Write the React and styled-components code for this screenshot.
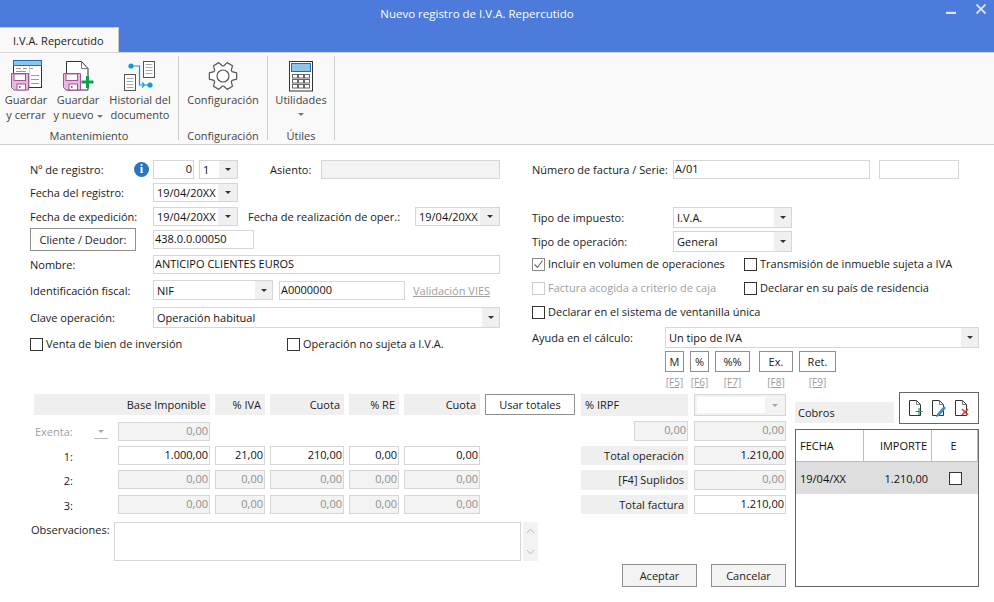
import React from 'react';
import styled, { createGlobalStyle } from 'styled-components';

const GlobalStyle = createGlobalStyle`
  html, body { margin: 0; padding: 0; background: #fff; }
  body {
    font-family: "Open Sans", "Noto Sans", "Liberation Sans", sans-serif;
    font-size: 11px;
    color: #1a1a1a;
  }
`;

const Window = styled.div`
  width: 994px;
  height: 602px;
  overflow: hidden;
  background: #fff;
  display: flex;
  flex-direction: column;
`;

const TitleBar = styled.div`
  height: 27px;
  background: #4c7bdc;
  color: #fff;
  font-size: 11.5px;
  display: flex;
  align-items: center;
  justify-content: center;
  padding-right: 40px;
  position: relative;
`;

const WinControls = styled.div`
  position: absolute;
  right: 8px;
  top: 4px;
  display: flex;
  gap: 20px;
  align-items: center;
`;

const TabStrip = styled.div`
  height: 25px;
  background: #4c7bdc;
  display: flex;
`;

const Tab = styled.div`
  width: 119px;
  background: #f9f9f9;
  border-top: 1px solid #c9c9c9;
  border-right: 1px solid #c9c9c9;
  box-sizing: border-box;
  display: flex;
  align-items: center;
  padding-left: 13px;
  color: #222;
`;

const Ribbon = styled.div`
  height: 93px;
  box-sizing: border-box;
  background: #f9f9f9;
  border-top: 1px solid #d4d4d4;
  border-bottom: 1px solid #cfcfcf;
  display: flex;
  padding-top: 3px;
`;

const Group = styled.div`
  width: ${({ $w }) => $w}px;
  height: 84px;
  box-sizing: border-box;
  border-right: 1px solid #cdcdcd;
  display: flex;
  flex-direction: column;
  align-items: center;
`;

const GroupItems = styled.div`
  height: 70px;
  flex-shrink: 0;
  box-sizing: border-box;
  padding: 3px ${({ $pr }) => $pr || 0}px 0 0;
  width: 100%;
  display: flex;
  justify-content: center;
  gap: ${({ $gap }) => $gap || 0}px;
`;

const GroupName = styled.div`
  color: #444;
  line-height: 14px;
  margin-top: 3px;
  flex-shrink: 0;
`;

const RibbonButton = styled.div`
  width: ${({ $w }) => $w}px;
  display: flex;
  flex-direction: column;
  align-items: center;
  color: #444;
  line-height: 15px;
  text-align: center;
  white-space: nowrap;
  svg { display: block; margin-bottom: -1px; }
`;

const CaretLine = styled.div`
  height: 15px;
  display: flex;
  align-items: center;
`;

const Caret = styled.span`
  display: inline-block;
  width: 0;
  height: 0;
  border-left: 3px solid transparent;
  border-right: 3px solid transparent;
  border-top: 3px solid ${({ $color }) => $color || '#333'};
  vertical-align: middle;
`;

const Body = styled.div`
  flex: 1;
  padding: 15px 0 0 30px;
`;

const Top = styled.div`
  display: flex;
  gap: 32px;
`;

const Column = styled.div`
  width: ${({ $w }) => $w}px;
  display: flex;
  flex-direction: column;
`;

const Row = styled.div`
  height: ${({ $h }) => $h || 19}px;
  margin-top: ${({ $mt }) => $mt || 0}px;
  display: flex;
  align-items: center;
`;

const Label = styled.div`
  width: ${({ $w }) => ($w ? `${$w}px` : 'auto')};
  margin-left: ${({ $ml }) => $ml || 0}px;
  flex-shrink: 0;
  white-space: nowrap;
`;

const Field = styled.div`
  width: ${({ $w }) => ($w ? `${$w}px` : 'auto')};
  flex: ${({ $grow }) => ($grow ? 1 : '0 0 auto')};
  height: ${({ $h }) => $h || 19}px;
  margin-left: ${({ $ml }) => $ml || 0}px;
  justify-self: ${({ $end }) => ($end ? 'end' : 'stretch')};
  box-sizing: border-box;
  border: 1px solid #d6d6d6;
  background: ${({ $off }) => ($off ? '#f3f3f3' : '#fff')};
  color: ${({ $off, $strong }) => ($off && !$strong ? '#909090' : '#111')};
  text-align: ${({ $right }) => ($right ? 'right' : 'left')};
  padding: 0 1px 1px 1px;
  line-height: 16px;
  white-space: nowrap;
  overflow: hidden;
`;

const Select = styled.div`
  width: ${({ $w }) => ($w ? `${$w}px` : 'auto')};
  height: ${({ $h }) => $h || 19}px;
  margin-left: ${({ $ml }) => $ml || 0}px;
  box-sizing: border-box;
  border: 1px solid #d6d6d6;
  display: flex;
  align-items: center;
  background: #fff;
  color: #111;
`;

const SelectText = styled.div`
  flex: 1;
  padding-left: ${({ $pad }) => $pad || 3}px;
  white-space: nowrap;
  overflow: hidden;
`;

const SelectArrow = styled.div`
  width: ${({ $w }) => $w || 17}px;
  align-self: stretch;
  background: #f0f0f0;
  display: flex;
  align-items: center;
  justify-content: center;
`;

const InfoDot = styled.div`
  width: 15px;
  height: 15px;
  border-radius: 50%;
  background: #2a76b9;
  color: #fff;
  font: bold 12px "Liberation Serif", serif;
  display: flex;
  align-items: center;
  justify-content: center;
  margin: 0 4px 0 0;
  flex-shrink: 0;
`;

const Button = styled.div`
  box-sizing: border-box;
  width: ${({ $w }) => $w}px;
  height: ${({ $h }) => $h || 21}px;
  border: 1px solid #8f8f8f;
  background: ${({ $grey }) => ($grey ? '#f3f3f3' : '#fff')};
  display: flex;
  align-items: center;
  justify-content: center;
  color: #222;
  flex-shrink: 0;
  white-space: nowrap;
`;

const LinkText = styled.div`
  margin-left: 8px;
  color: #a0a0a0;
  text-decoration: underline;
  white-space: nowrap;
`;

const CheckWrap = styled.div`
  width: ${({ $w }) => ($w ? `${$w}px` : 'auto')};
  display: flex;
  align-items: center;
  gap: 3px;
  white-space: nowrap;
  flex-shrink: 0;
  color: ${({ $off }) => ($off ? '#a0a0a0' : '#1a1a1a')};
`;

const CheckText = styled.span`
  margin-bottom: 2px;
`;

const Box = styled.div`
  width: 13px;
  height: 13px;
  box-sizing: border-box;
  border: 1px solid ${({ $tone }) => $tone || '#333'};
  background: #fff;
  display: flex;
  align-items: center;
  justify-content: center;
  flex-shrink: 0;
`;

const Shortcuts = styled.div`
  display: flex;
  margin-left: 133px;
  margin-top: 3px;
`;

const Shortcut = styled.div`
  display: flex;
  flex-direction: column;
  align-items: center;
  margin-right: ${({ $gap }) => $gap}px;
  gap: 4px;
`;

const FKey = styled.div`
  color: #9a9a9a;
  font-size: 10px;
  line-height: 12px;
  text-decoration: underline;
`;

const Bottom = styled.div`
  display: flex;
  margin-top: 4px;
  height: 195px;
`;

const LeftBlock = styled.div`
  width: 545px;
  padding-top: 2px;
  box-sizing: border-box;
`;

const TaxGrid = styled.div`
  display: grid;
  margin-left: 4px;
  grid-template-columns: 79px 92px 50px 74px 50px 76px 90px;
  grid-template-rows: 23px 19px 19px 20px 19px;
  column-gap: 5px;
  row-gap: 5px;
`;

const HeadCell = styled.div`
  grid-column: span ${({ $span }) => $span || 1};
  height: 21px;
  background: #efefef;
  display: flex;
  align-items: center;
  justify-content: flex-end;
  padding: 0 4px;
  white-space: nowrap;
`;

const RowName = styled.div`
  text-align: right;
  padding-right: 40px;
  line-height: 19px;
  margin-top: 1px;
`;

const Spacer = styled.span`
  grid-column: span ${({ $span }) => $span || 1};
`;

const ExentaCell = styled.div`
  display: flex;
  align-items: center;
  justify-content: space-between;
  color: #a0a0a0;
  padding-left: 1px;
`;

const ExentaPick = styled.div`
  width: 14px;
  height: 14px;
  border-bottom: 1px solid #bbb;
  display: flex;
  align-items: center;
  justify-content: center;
  margin-right: 5px;
`;

const Notes = styled.div`
  display: flex;
  margin-top: 8px;
  height: 39px;
`;

const NotesLabel = styled.div`
  width: 84px;
  flex-shrink: 0;
  padding-left: 1px;
  box-sizing: border-box;
`;

const NotesArea = styled.div`
  width: 407px;
  box-sizing: border-box;
  border: 1px solid #d6d6d6;
`;

const NotesScroll = styled.div`
  width: 15px;
  margin-left: 2px;
  background: #f3f3f3;
  display: flex;
  flex-direction: column;
  justify-content: space-between;
  align-items: center;
  padding: 6px 0;
  box-sizing: border-box;
`;

const MiddleBlock = styled.div`
  width: 205px;
  margin-left: 6px;
  padding-top: 2px;
  box-sizing: border-box;
  display: flex;
  flex-direction: column;
  justify-content: space-between;
`;

const TotalsGrid = styled.div`
  display: grid;
  grid-template-columns: 107px 92px;
  grid-template-rows: 22px 20px 19px 20px 19px;
  column-gap: 6px;
  row-gap: 5px;
`;

const TotalLabel = styled.div`
  background: #efefef;
  text-align: ${({ $left }) => ($left ? 'left' : 'right')};
  padding: 0 4px;
  line-height: ${({ $left }) => ($left ? 21 : 19)}px;
  white-space: nowrap;
`;

const IrpfSelect = styled.div`
  border: 1px solid #d6d6d6;
  background: #f3f3f3;
  display: flex;
  align-items: center;
  padding: 2px 7px 2px 2px;
  gap: 7px;
`;

const IrpfValue = styled.div`
  flex: 1;
  height: 100%;
  background: #fff;
`;

const Actions = styled.div`
  display: flex;
  justify-content: flex-end;
  gap: 14px;
`;

const CobrosBlock = styled.div`
  width: 184px;
  margin-left: 9px;
  display: flex;
  flex-direction: column;
`;

const CobrosTop = styled.div`
  display: flex;
  align-items: flex-end;
  gap: 5px;
`;

const CobrosTitle = styled.div`
  flex: 1;
  height: 21px;
  margin-bottom: 1px;
  background: #efefef;
  display: flex;
  align-items: center;
  padding-left: 3px;
`;

const IconBox = styled.div`
  width: 80px;
  height: 32px;
  box-sizing: border-box;
  border: 1px solid #666;
  display: flex;
  align-items: center;
  justify-content: center;
  gap: 6px;
`;

const CobrosTable = styled.div`
  margin-top: 5px;
  height: 158px;
  box-sizing: border-box;
  border: 1px solid #666;
`;

const TableRow = styled.div`
  height: ${({ $h }) => $h}px;
  display: grid;
  grid-template-columns: 68px 68px 46px;
  background: ${({ $on }) => ($on ? '#dedede' : '#fff')};
  border-bottom: ${({ $on }) => ($on ? 'none' : '1px solid #bdbdbd')};
  box-sizing: border-box;
`;

const TableCell = styled.div`
  display: flex;
  align-items: center;
  justify-content: ${({ $at }) => $at || 'flex-start'};
  padding: 0 ${({ $pr }) => $pr || 4}px 0 4px;
  border-right: ${({ $line }) => ($line ? '1px solid #bdbdbd' : 'none')};
  color: #111;
  white-space: nowrap;
`;

const Arrow = () => <Caret />;

const SaveDisk = ({ x, y }) => (
  <g transform={`translate(${x} ${y})`}>
    <path d="M.5.5h17v16.5H3L.5 14.5z" fill="#e3bcd9" stroke="#a651a0" />
    <rect x="3" y="1" width="11.5" height="6.5" fill="#fff" stroke="#a651a0" />
    <rect x="6" y="11" width="8.5" height="6" fill="#fff" stroke="#a651a0" />
    <rect x="8" y="13" width="1.5" height="2" fill="#a651a0" />
  </g>
);

const SaveCloseIcon = () => (
  <svg width="34" height="34" viewBox="0 0 34 34">
    <rect x="4.5" y="1.5" width="28" height="27" fill="#fff" stroke="#333" />
    <rect x="4.5" y="1.5" width="28" height="5" fill="#8ec5ec" stroke="#1f6fb0" />
    <path d="M7 9.5h5M14 9.5h4M20 9.5h4M7 12.5h10M22 16.5h8M22 20.5h8M22 24.5h8" stroke="#999" />
    <path d="M20.5 7v21" stroke="#ccc" />
    <SaveDisk x={2} y={14} />
  </svg>
);

const SaveNewIcon = () => (
  <svg width="34" height="34" viewBox="0 0 34 34">
    <path d="M5.5 2.5h15l6.5 7v21.5H5.5z" fill="#fff" stroke="#333" />
    <path d="M20.5 2.5v7h6.5" fill="none" stroke="#777" />
    <SaveDisk x={2} y={14} />
    <path d="M26.5 17v12M20.5 23h12" stroke="#0aa14f" strokeWidth="3" />
  </svg>
);

const HistoryIcon = () => (
  <svg width="34" height="34" viewBox="0 0 34 34">
    <g fill="#fff" stroke="#555">
      <rect x="20.5" y="2.5" width="11" height="16" />
      <rect x="1.5" y="15.5" width="11" height="16" />
    </g>
    <path d="M22.5 5.5h7M22.5 8.5h7M22.5 11.5h7M22.5 14.5h7M3.5 19.5h7M3.5 22.5h7M3.5 25.5h7M3.5 28.5h7" stroke="#aaa" />
    <circle cx="8" cy="7" r="2.6" fill="#0e9bdc" />
    <circle cx="27" cy="26" r="2.6" fill="#0e9bdc" />
    <path d="M8 7h8.5v19H25M19 23.5l2.5 2.5-2.5 2.5" fill="none" stroke="#0e9bdc" strokeWidth="1.2" />
  </svg>
);

const gearPath = () => {
  const pts = [];
  for (let i = 0; i < 6; i++) {
    const a = (i * Math.PI) / 3;
    const d = 0.3;
    const p = (r, t) => `${(15 + r * Math.cos(a + t)).toFixed(2)} ${(15 + r * Math.sin(a + t)).toFixed(2)}`;
    pts.push(p(10, -d - 0.16), p(14, -d + 0.08), p(14, d - 0.08), p(10, d + 0.16));
  }
  return `M${pts.join('L')}Z`;
};

const GearIcon = () => (
  <svg width="34" height="34" viewBox="-2 -2 34 34">
    <path d={gearPath()} fill="#fff" stroke="#555" strokeWidth="1.2" strokeLinejoin="round" />
    <circle cx="15" cy="15" r="6" fill="#fff" stroke="#555" strokeWidth="1.2" />
  </svg>
);

const CalcIcon = () => (
  <svg width="34" height="34" viewBox="0 0 34 34">
    <rect x="5.5" y="2.5" width="23" height="29.5" fill="#fff" stroke="#333" />
    <rect x="7.5" y="4.5" width="19" height="8" fill="#8ec5ec" stroke="#1f6fb0" />
    {[15, 20, 25].map(y => [8, 14, 20].map(x => (
      <rect key={`${x}-${y}`} x={x + 0.5} y={y + 0.5} width="5" height="3.5" fill="#fff" stroke="#666" />
    )))}
  </svg>
);

const PageIcon = ({ children }) => (
  <svg width="17" height="18" viewBox="0 0 17 18">
    <path d="M1.5 1.5h7l4 4v11h-11z" fill="#fff" stroke="#333" />
    <path d="M8.5 1.5v4h4" fill="none" stroke="#777" />
    {children}
  </svg>
);

const Check = ({ label, checked, off, w }) => (
  <CheckWrap $w={w} $off={off}>
    <Box $tone={off ? '#ccc' : checked ? '#888' : '#333'}>
      {checked && (
        <svg width="11" height="11" viewBox="0 0 11 11">
          <path d="M1.5 5.5l3 3 5-7" fill="none" stroke="#666" strokeWidth="1.1" />
        </svg>
      )}
    </Box>
    <CheckText>{label}</CheckText>
  </CheckWrap>
);

const Combo = ({ children, w, h, ml, arrow, pad }) => (
  <Select $w={w} $h={h} $ml={ml}>
    <SelectText $pad={pad}>{children}</SelectText>
    <SelectArrow $w={arrow}><Arrow /></SelectArrow>
  </Select>
);

const shortcuts = [
  ['M', 19, 6, '[F5]'],
  ['%', 19, 6, '[F6]'],
  ['%%', 35, 9, '[F7]'],
  ['Ex.', 34, 6, '[F8]'],
  ['Ret.', 37, 0, '[F9]'],
];

const taxRows = [
  ['1:', ['1.000,00', '21,00', '210,00', '0,00', '0,00'], false],
  ['2:', ['0,00', '0,00', '0,00', '0,00', '0,00'], true],
  ['3:', ['0,00', '0,00', '0,00', '0,00', '0,00'], true],
];

export default function App() {
  return (
    <Window>
      <GlobalStyle />
      <TitleBar>
        Nuevo registro de I.V.A. Repercutido
        <WinControls>
          <svg width="10" height="10" viewBox="0 0 10 10"><path d="M0 9h10" stroke="#e4e4e4" strokeWidth="2.4" /></svg>
          <svg width="10" height="10" viewBox="0 0 10 10"><path d="M.5.5l9 9M9.5.5l-9 9" stroke="#e4e4e4" strokeWidth="1.8" /></svg>
        </WinControls>
      </TitleBar>
      <TabStrip><Tab>I.V.A. Repercutido</Tab></TabStrip>
      <Ribbon>
        <Group $w={179}>
          <GroupItems $gap={4} $pr={2}>
            <RibbonButton $w={44}><SaveCloseIcon />Guardar<br />y cerrar</RibbonButton>
            <RibbonButton $w={52}><SaveNewIcon />Guardar<br /><span>y nuevo <Caret $color="#777" /></span></RibbonButton>
            <RibbonButton $w={64}><HistoryIcon />Historial del<br />documento</RibbonButton>
          </GroupItems>
          <GroupName>Mantenimiento</GroupName>
        </Group>
        <Group $w={89}>
          <GroupItems>
            <RibbonButton $w={76}><GearIcon />Configuración</RibbonButton>
          </GroupItems>
          <GroupName>Configuración</GroupName>
        </Group>
        <Group $w={67}>
          <GroupItems>
            <RibbonButton $w={54}>
              <CalcIcon />
              Utilidades
              <CaretLine><Caret $color="#777" /></CaretLine>
            </RibbonButton>
          </GroupItems>
          <GroupName>Útiles</GroupName>
        </Group>
      </Ribbon>
      <Body>
        <Top>
          <Column $w={470}>
            <Row>
              <Label $w={104}>Nº de registro:</Label>
              <InfoDot>i</InfoDot>
              <Field $w={41} $right>0</Field>
              <Combo w={39} ml={5} arrow={18}>1</Combo>
              <Label $ml={32} $w={51}>Asiento:</Label>
              <Field $grow $off />
            </Row>
            <Row $mt={4}>
              <Label $w={123}>Fecha del registro:</Label>
              <Combo w={85} arrow={19}>19/04/20XX</Combo>
            </Row>
            <Row $mt={5}>
              <Label $w={123}>Fecha de expedición:</Label>
              <Combo w={85} arrow={19}>19/04/20XX</Combo>
              <Label $ml={10} $w={167}>Fecha de realización de oper.:</Label>
              <Combo w={85} arrow={19}>19/04/20XX</Combo>
            </Row>
            <Row $mt={2} $h={23}>
              <Button $w={106} $h={23}>Cliente / Deudor:</Button>
              <Field $w={101} $ml={17}>438.0.0.00050</Field>
            </Row>
            <Row $mt={4}>
              <Label $w={123}>Nombre:</Label>
              <Field $grow>ANTICIPO CLIENTES EUROS</Field>
            </Row>
            <Row $mt={6} $h={20}>
              <Label $w={123}>Identificación fiscal:</Label>
              <Combo w={120} h={20} arrow={17}>NIF</Combo>
              <Field $w={126} $ml={6}>A0000000</Field>
              <LinkText>Validación VIES</LinkText>
            </Row>
            <Row $mt={7} $h={21}>
              <Label $w={123}>Clave operación:</Label>
              <Combo w={347} h={21}>Operación habitual</Combo>
            </Row>
            <Row $mt={8} $h={16}>
              <Check w={257} label="Venta de bien de inversión" />
              <Check label="Operación no sujeta a I.V.A." />
            </Row>
          </Column>
          <Column $w={447}>
            <Row>
              <Label $w={141}>Número de factura / Serie:</Label>
              <Field $w={197}>A/01</Field>
              <Field $w={80} $ml={9} />
            </Row>
            <Row $mt={28} $h={21}>
              <Label $w={141}>Tipo de impuesto:</Label>
              <Combo w={119} h={21}>I.V.A.</Combo>
            </Row>
            <Row $mt={3} $h={21}>
              <Label $w={141}>Tipo de operación:</Label>
              <Combo w={119} h={21}>General</Combo>
            </Row>
            <Row $mt={4} $h={16}>
              <Check w={212} checked label="Incluir en volumen de operaciones" />
              <Check label="Transmisión de inmueble sujeta a IVA" />
            </Row>
            <Row $mt={8} $h={16}>
              <Check w={212} off label="Factura acogida a criterio de caja" />
              <Check label="Declarar en su país de residencia" />
            </Row>
            <Row $mt={8} $h={16}>
              <Check label="Declarar en el sistema de ventanilla única" />
            </Row>
            <Row $mt={7} $h={21}>
              <Label $w={133}>Ayuda en el cálculo:</Label>
              <Combo w={314} h={21}>Un tipo de IVA</Combo>
            </Row>
            <Shortcuts>
              {shortcuts.map(([text, w, gap, key]) => (
                <Shortcut key={key} $gap={gap}>
                  <Button $w={w}>{text}</Button>
                  <FKey>{key}</FKey>
                </Shortcut>
              ))}
            </Shortcuts>
          </Column>
        </Top>
        <Bottom>
          <LeftBlock>
            <TaxGrid>
              <HeadCell $span={2}>Base Imponible</HeadCell>
              <HeadCell>% IVA</HeadCell>
              <HeadCell>Cuota</HeadCell>
              <HeadCell>% RE</HeadCell>
              <HeadCell>Cuota</HeadCell>
              <Button $w={90}>Usar totales</Button>
              <ExentaCell>
                Exenta:
                <ExentaPick><Caret $color="#aaa" /></ExentaPick>
              </ExentaCell>
              <Field $off $right>0,00</Field>
              <Spacer $span={5} />
              {taxRows.map(([name, values, off]) => (
                <React.Fragment key={name}>
                  <RowName>{name}</RowName>
                  {values.map((v, i) => <Field key={i} $off={off} $right>{v}</Field>)}
                  <Spacer />
                </React.Fragment>
              ))}
            </TaxGrid>
            <Notes>
              <NotesLabel>Observaciones:</NotesLabel>
              <NotesArea />
              <NotesScroll>
                <svg width="9" height="6" viewBox="0 0 9 6"><path d="M1 5l3.5-4L8 5" fill="none" stroke="#bbb" /></svg>
                <svg width="9" height="6" viewBox="0 0 9 6"><path d="M1 1l3.5 4L8 1" fill="none" stroke="#bbb" /></svg>
              </NotesScroll>
            </Notes>
          </LeftBlock>
          <MiddleBlock>
            <TotalsGrid>
              <TotalLabel $left>% IRPF</TotalLabel>
              <IrpfSelect>
                <IrpfValue />
                <Caret $color="#aaa" />
              </IrpfSelect>
              <Field $w={54} $h={20} $off $right $end>0,00</Field>
              <Field $h={20} $off $right>0,00</Field>
              <TotalLabel>Total operación</TotalLabel>
              <Field $off $strong $right>1.210,00</Field>
              <TotalLabel>[F4] Suplidos</TotalLabel>
              <Field $h={20} $off $right>0,00</Field>
              <TotalLabel>Total factura</TotalLabel>
              <Field $right>1.210,00</Field>
            </TotalsGrid>
            <Actions>
              <Button $w={75} $h={23} $grey>Aceptar</Button>
              <Button $w={75} $h={23} $grey>Cancelar</Button>
            </Actions>
          </MiddleBlock>
          <CobrosBlock>
            <CobrosTop>
              <CobrosTitle>Cobros</CobrosTitle>
              <IconBox>
                <PageIcon><path d="M11 9v7M7.5 12.5h7" stroke="#0aa14f" strokeWidth="1.2" /></PageIcon>
                <PageIcon><path d="M6 15l7-8 2 2-7 8-3 1z" fill="#2d8fd6" /></PageIcon>
                <PageIcon><path d="M8 10l6 6M14 10l-6 6" stroke="#e8333a" strokeWidth="1.6" /></PageIcon>
              </IconBox>
            </CobrosTop>
            <CobrosTable>
              <TableRow $h={32}>
                <TableCell $line>FECHA</TableCell>
                <TableCell $line $at="flex-end">IMPORTE</TableCell>
                <TableCell $line $at="center" $pr={6}>E</TableCell>
              </TableRow>
              <TableRow $h={32} $on>
                <TableCell>19/04/XX</TableCell>
                <TableCell $at="flex-end">1.210,00</TableCell>
                <TableCell $at="center" $pr={4}><Box /></TableCell>
              </TableRow>
            </CobrosTable>
          </CobrosBlock>
        </Bottom>
      </Body>
    </Window>
  );
}
